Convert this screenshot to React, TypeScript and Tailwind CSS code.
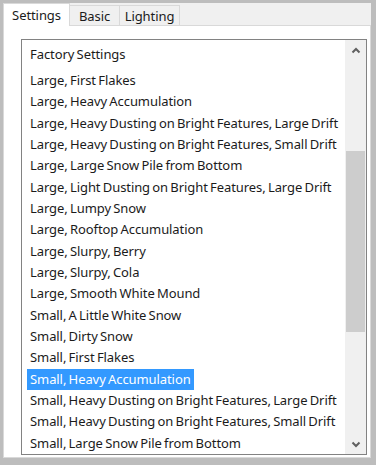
import React from "react";

const items = [
  "Large, First Flakes",
  "Large, Heavy Accumulation",
  "Large, Heavy Dusting on Bright Features, Large Drift",
  "Large, Heavy Dusting on Bright Features, Small Drift",
  "Large, Large Snow Pile from Bottom",
  "Large, Light Dusting on Bright Features, Large Drift",
  "Large, Lumpy Snow",
  "Large, Rooftop Accumulation",
  "Large, Slurpy, Berry",
  "Large, Slurpy, Cola",
  "Large, Smooth White Mound",
  "Small, A Little White Snow",
  "Small, Dirty Snow",
  "Small, First Flakes",
  "Small, Heavy Accumulation",
  "Small, Heavy Dusting on Bright Features, Large Drift",
  "Small, Heavy Dusting on Bright Features, Small Drift",
  "Small, Large Snow Pile from Bottom",
];

export default function App() {
  return (
    <div
      className="w-[376px] h-[465px] bg-[#bdbdbd] pt-[3px] pl-[3px] pr-[5px] pb-[7px] text-[#1b1b1b] [word-spacing:-1px] tracking-[-0.08px]"
      style={{ fontFamily: '"Noto Sans", "Open Sans", sans-serif' }}
    >
      <div className="w-full h-full bg-[#f0f0f0] flex flex-col">
        {/* tabs */}
        <div className="h-[23px] flex items-end relative z-10 shrink-0">
          <div className="h-[23px] w-[67px] bg-white border border-[#d9d9d9] border-b-0 flex items-center justify-center text-[13px] leading-none pt-px">
            Settings
          </div>
          <div className="h-[21px] w-[50px] border border-[#d9d9d9] border-l-0 border-b-0 flex items-center justify-center text-[13px] leading-none pt-px">
            Basic
          </div>
          <div className="h-[21px] w-[60px] border border-[#d9d9d9] border-l-0 border-b-0 flex items-center justify-center text-[13px] leading-none pt-px">
            Lighting
          </div>
        </div>
        {/* page */}
        <div className="flex-1 bg-white border border-[#d9d9d9] -mt-px pt-[13px] pl-[17px] pr-[3px] pb-[2px] flex flex-col">
          <div className="flex-1 border border-[#828282] flex overflow-hidden">
            <div className="flex-1 overflow-hidden pt-[4px] pl-[5px]">
              <div className="h-[21.35px] flex items-center pl-[3px] text-[13px] whitespace-nowrap mb-[4.65px]">
                Factory Settings
              </div>
              {items.map((t, i) => {
                const sel = i === 14;
                return (
                  <div key={i} className="h-[21.35px] flex items-center">
                    <span
                      className={
                        "h-full flex items-center pl-[3px] pr-[3px] text-[13px] whitespace-nowrap " +
                        (sel ? "bg-[#3399ff] text-white" : "")
                      }
                    >
                      {t}
                    </span>
                  </div>
                );
              })}
            </div>
            <div className="w-[21px] bg-[#f0f0f0] flex flex-col shrink-0">
              <div className="h-[20px] flex items-center justify-center shrink-0">
                <svg width="10" height="7" viewBox="0 0 10 7">
                  <polyline points="1.5,5.5 5,2 8.5,5.5" fill="none" stroke="#606060" strokeWidth="2" />
                </svg>
              </div>
              <div className="h-[91px] shrink-0" />
              <div className="h-[181px] bg-[#cdcdcd] mx-px shrink-0" />
              <div className="flex-1" />
              <div className="h-[20px] flex items-center justify-center shrink-0">
                <svg width="10" height="7" viewBox="0 0 10 7">
                  <polyline points="1.5,1.5 5,5 8.5,1.5" fill="none" stroke="#606060" strokeWidth="2" />
                </svg>
              </div>
            </div>
          </div>
        </div>
      </div>
    </div>
  );
}
